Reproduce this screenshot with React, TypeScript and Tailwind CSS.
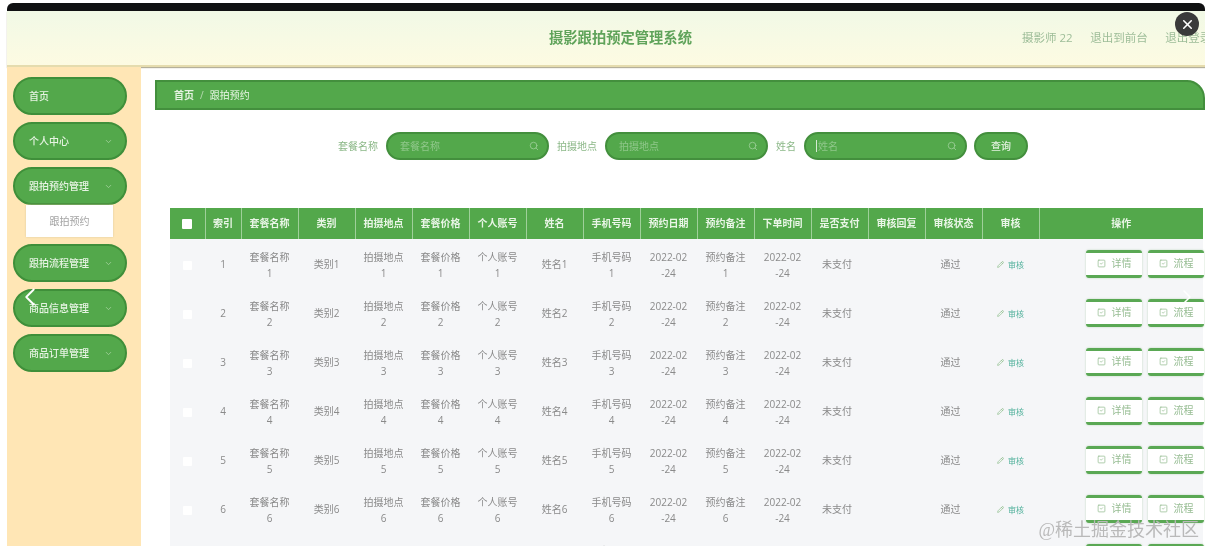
import { ChevronDown, ChevronLeft, ChevronRight, Pencil, Search, SquareCheck, X } from 'lucide-react'

const cjk = "font-['Open_Sans','Noto_Sans_CJK_SC',sans-serif]"

const menu = ['个人中心', '跟拍预约管理']
const menuAfter = ['跟拍流程管理', '商品信息管理', '商品订单管理']

const heads = ['索引', '套餐名称', '类别', '拍摄地点', '套餐价格', '个人账号', '姓名', '手机号码', '预约日期', '预约备注', '下单时间', '是否支付', '审核回复', '审核状态', '审核']

function MenuItem({ label, arrow = true }: { label: string; arrow?: boolean }) {
  return (
    <div className="flex items-center justify-between w-[114px] h-[38px] pl-[14px] pr-3 rounded-full border-2 border-[#3f8f3a] bg-[#53a84b] text-[10px] font-medium text-[#e6f3e2]">
      <span>{label}</span>
      {arrow && <ChevronDown size={9} className="text-[#a9d5a3]" />}
    </div>
  )
}

function SearchField({ label, focused = false }: { label: string; focused?: boolean }) {
  return (
    <div className="flex items-center gap-2">
      <span className="text-[10px] text-[#8cb888]">{label}</span>
      <div className="flex items-center w-[163px] h-[28px] pl-3 pr-2 rounded-full border-2 border-[#438f3d] bg-[#53a84b] text-[10px] text-[#8fc78a]">
        {focused && <span className="w-px h-[12px] -ml-0.5 mr-px bg-[#d5ead2]" />}
        <span>{label}</span>
        <Search size={10} className="ml-auto text-[#9ccf97]" />
      </div>
    </div>
  )
}

function ActionButton({ label }: { label: string }) {
  return (
    <div className="flex shrink-0 items-center justify-center gap-1.5 w-[56px] h-[28px] rounded-[3px] border-y-[3px] border-[#5aa854] bg-white text-[10px] text-[#97bd93] shadow-[0_0_2px_#b5d0b1]">
      <SquareCheck size={9} />
      <span>{label}</span>
    </div>
  )
}

function Row({ n }: { n: number }) {
  const cell = 'pt-[2px] text-center text-[10px] text-[#8a8a8a]'
  const two = (t: string) => (
    <td className={`px-1.5 leading-4 ${cell}`}>
      {t}
      <br />
      {n}
    </td>
  )
  const date = (
    <td className={`px-1 leading-4 ${cell}`}>
      2022-02
      <br />
      -24
    </td>
  )
  return (
    <tr className="h-[49px] bg-[#f5f6f8]">
      <td className="text-center">
        <span className="inline-block w-[9px] h-[9px] rounded-[1px] bg-white" />
      </td>
      <td className={cell}>{n}</td>
      {two('套餐名称')}
      <td className={cell}>类别{n}</td>
      {two('拍摄地点')}
      {two('套餐价格')}
      {two('个人账号')}
      <td className={cell}>姓名{n}</td>
      {two('手机号码')}
      {date}
      {two('预约备注')}
      {date}
      <td className="pt-[2px] pl-[11px] text-[10px] text-[#8a8a8a]">未支付</td>
      <td />
      <td className={`pr-[6px] ${cell}`}>通过</td>
      <td className="pt-[2px]">
        <div className="flex items-center justify-center gap-1 text-[8px] text-[#4fb09a]">
          <Pencil size={7} className="text-[#7cb578]" />
          审核
        </div>
      </td>
      <td>
        <div className="flex justify-end gap-[6px] -mr-px">
          <ActionButton label="详情" />
          <ActionButton label="流程" />
        </div>
      </td>
    </tr>
  )
}

export default function App() {
  return (
    <div className={`relative w-[1205px] h-[546px] overflow-hidden bg-white pt-[3px] pl-[7px] blur-[0.5px] ${cjk}`}>
      <div className="h-[8px] rounded-t-md bg-[#101112]" />

      <header className="flex items-center justify-between h-[56px] pl-[542px] pr-0 bg-gradient-to-b from-[#f1f9e6] to-[#fdfbe2] border-b-2 border-[#e5dcae] shadow-[0_1px_1px_#b5b09a] whitespace-nowrap">
        <h1 className="text-[14.3px] font-bold text-[#5fa35a]">摄影跟拍预定管理系统</h1>
        <div className="flex w-[183px] shrink-0 gap-[17.5px] overflow-hidden text-[11.5px] text-[#9dbd98]">
          <span className="shrink-0">摄影师 22</span>
          <span className="shrink-0">退出到前台</span>
          <span className="shrink-0">退出登录</span>
        </div>
      </header>

      <div className="flex h-[479px]">
        <aside className="flex flex-col gap-[7px] w-[134px] shrink-0 pt-[10px] pl-[6px] bg-[#ffe6b5]">
          <MenuItem label="首页" arrow={false} />
          {menu.map((m) => (
            <MenuItem key={m} label={m} />
          ))}
          <div className="flex items-center justify-center w-[87px] h-[32px] -mt-[7px] ml-[13px] bg-white text-[10px] text-[#a3a3a3] shadow-[0_0_2px_#d9c9a0]">
            跟拍预约
          </div>
          {menuAfter.map((m) => (
            <MenuItem key={m} label={m} />
          ))}
        </aside>

        <main className="flex-1 min-w-0 pt-[13px] pl-[14px]">
          <div className="flex items-center gap-[6px] h-[30px] pl-[17px] rounded-tr-[18px] border-2 border-[#438f3d] bg-[#53a84b] text-[10px] font-bold text-[#e4f2e0]">
            <span>首页</span>
            <span className="font-normal text-[#b8dcb3]">/</span>
            <span className="font-medium text-[#d3ebcf]">跟拍预约</span>
          </div>

          <form className="flex items-center gap-[8px] mt-[22px] ml-[183px]">
            <SearchField label="套餐名称" />
            <SearchField label="拍摄地点" />
            <SearchField label="姓名" focused />
            <button type="button" className="w-[54px] h-[28px] -ml-px rounded-full border-2 border-[#438f3d] bg-[#53a84b] text-[10px] font-medium text-[#e4f2e0]">
              查询
            </button>
          </form>

          <table className="table-fixed w-[1033px] mt-[48px] ml-[15px] border-collapse">
            <colgroup>
              <col className="w-[35px]" />
              <col className="w-[36px]" />
              {Array.from({ length: 14 }).map((_, i) => (
                <col key={i} className="w-[57px]" />
              ))}
              <col className="w-[164px]" />
            </colgroup>
            <thead>
              <tr className="h-[31px] bg-[#53a84b] text-[10px] font-bold text-[#e9f5e6]">
                <th className="border-r border-[#9fd09a]">
                  <span className="inline-block w-[10px] h-[10px] align-middle rounded-[1px] bg-white" />
                </th>
                {heads.map((h) => (
                  <th key={h} className="border-r border-[#9fd09a]">
                    {h}
                  </th>
                ))}
                <th>操作</th>
              </tr>
            </thead>
            <tbody>
              {[1, 2, 3, 4, 5, 6, 7].map((n) => (
                <Row key={n} n={n} />
              ))}
            </tbody>
          </table>
        </main>
      </div>

      <button type="button" className="absolute top-[12px] right-[6px] flex items-center justify-center w-[24px] h-[24px] rounded-full bg-[#3a3a3a] text-white">
        <X size={15} strokeWidth={2.5} />
      </button>
      <ChevronLeft size={30} strokeWidth={1.5} className="absolute top-[282px] left-[15px] text-white" />
      <ChevronRight size={24} strokeWidth={1.5} className="absolute top-[285px] right-[6px] text-white" />
      <span className="absolute right-[6px] bottom-[6px] text-[18px] leading-5 text-[#b9b9b9] font-['Liberation_Serif','Noto_Sans_CJK_SC',serif]">
        @稀土掘金技术社区
      </span>
    </div>
  )
}
